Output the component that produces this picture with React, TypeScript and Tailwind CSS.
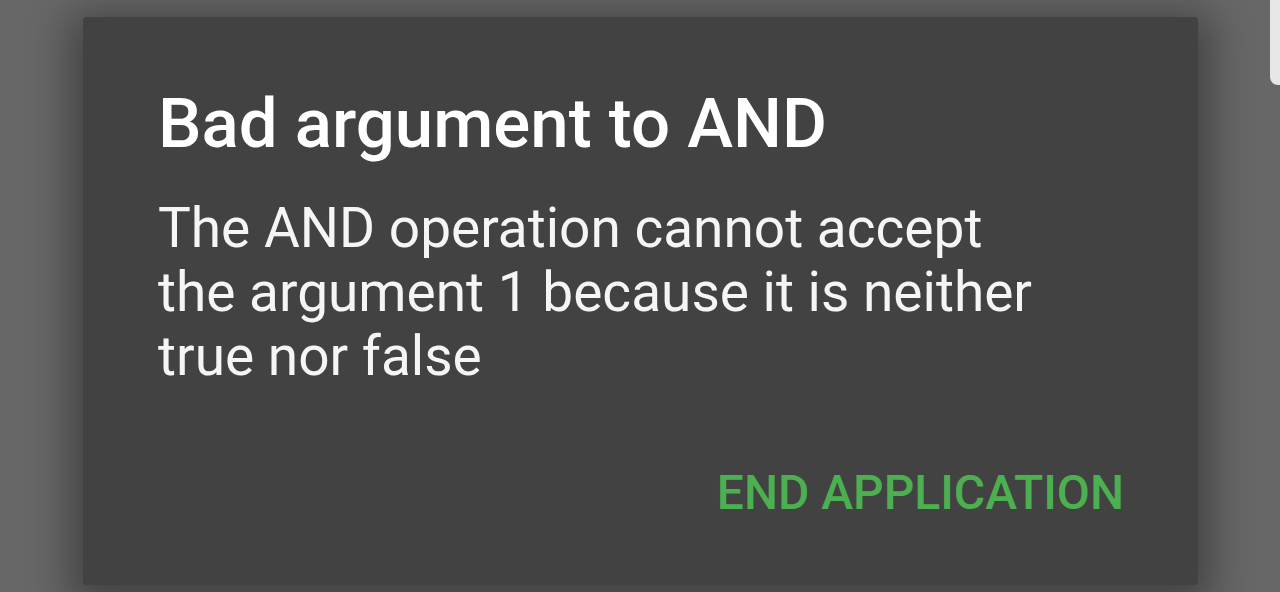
export default function App() {
  return (
    <div
      className="relative w-[1280px] h-[592px] overflow-hidden bg-[#676767]"
      style={{ fontFamily: "Roboto, 'Noto Sans', sans-serif" }}
    >
      {/* scrollbar peeking at the edge */}
      <div className="absolute right-0 top-0 w-[10px] h-[85px] rounded-bl-[8px] bg-[#e6e6e6]" />

      <div className="pl-[83px] pt-[17px]">
        <div className="w-[1115px] h-[568px] rounded-[4px] bg-[#424242] shadow-[0_10px_40px_14px_rgba(0,0,0,0.35)] flex flex-col pl-[75px] pr-[74px] pt-[67px]">
          <h1 className="text-[69px] leading-[80px] font-medium text-white">
            Bad argument to AND
          </h1>
          <p className="mt-[32px] text-[55px] leading-[64px] text-[#f5f5f5] w-[890px]">
            The AND operation cannot accept the argument 1 because it is neither true nor false
          </p>
          <div className="mt-auto mb-[64px] flex justify-end">
            <button className="text-[48px] leading-[56px] font-medium text-[#4caf50] uppercase">
              End Application
            </button>
          </div>
        </div>
      </div>
    </div>
  )
}
